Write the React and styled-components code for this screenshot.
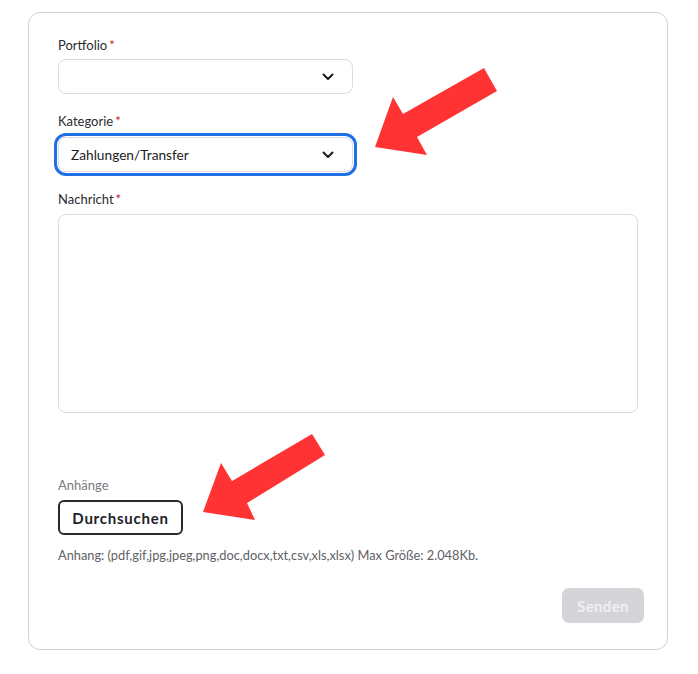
import React from 'react';
import styled, { createGlobalStyle } from 'styled-components';

const GlobalStyle = createGlobalStyle`
    body {
        margin: 0;
        background: #fff;
        font-family: Lato, "Noto Sans", sans-serif;
        color: #222;
    }
`;

const Page = styled.div`
    position: relative;
    width: 698px;
    height: 674px;
    padding: 12px 0 0 28px;
    box-sizing: border-box;
`;

const Card = styled.form`
    width: 640px;
    height: 638px;
    box-sizing: border-box;
    border: 1px solid #cfccdc;
    border-radius: 12px;
    padding: 24px 29px 0 29px;
    display: flex;
    flex-direction: column;
`;

const Label = styled.label`
    display: block;
    font-size: 13px;
    line-height: 16px;
    color: ${({muted}) => muted ? '#7b7b80' : '#2b2b30'};
    margin-bottom: ${({gap}) => gap || 6}px;
`;

const Req = styled.span`
    color: #b3261e;
    margin-left: 2px;
`;

const SelectBox = styled.div`
    width: 295px;
    height: 35px;
    box-sizing: border-box;
    border: 1px solid #dcdae6;
    border-radius: 8px;
    display: flex;
    align-items: center;
    justify-content: space-between;
    padding: 0 18px 0 12px;
    font-size: 13.7px;
    color: #222;
    outline: ${({focused}) => focused ? '3px solid #1f6fe5' : 'none'};
    outline-offset: 1px;
    margin-bottom: ${({mb}) => mb}px;
`;

const TextArea = styled.div`
    width: 100%;
    height: 199px;
    box-sizing: border-box;
    border: 1px solid #dcdae6;
    border-radius: 8px;
    margin-bottom: 64px;
`;

const Browse = styled.button`
    align-self: flex-start;
    width: 125px;
    height: 35px;
    box-sizing: border-box;
    border: 2px solid #2a2a2e;
    border-radius: 6px;
    background: #fff;
    font-family: Lato, "Noto Sans", sans-serif;
    font-weight: 700;
    font-size: 15px;
    letter-spacing: 0.75px;
    color: #22222a;
    margin-bottom: 12px;
`;

const Hint = styled.div`
    font-size: 12.8px;
    line-height: 16px;
    color: #5f5f66;
    margin-bottom: 25px;
`;

const Send = styled.button`
    align-self: flex-end;
    margin-right: -6px;
    width: 82px;
    height: 35px;
    border: none;
    border-radius: 7px;
    background: #d4d4d9;
    color: #f0f0f3;
    font-family: Lato, "Noto Sans", sans-serif;
    font-weight: 700;
    font-size: 15px;
    letter-spacing: 0.3px;
`;

const Arrow = styled.svg`
    position: absolute;
    left: 0;
    top: 0;
    pointer-events: none;
`;

const Chevron = () => (
    <svg width="12" height="8" viewBox="0 0 12 8">
        <path d="M1.5 1.5 L6 6 L10.5 1.5" fill="none" stroke="#1c1c1c" strokeWidth="2" strokeLinecap="round" strokeLinejoin="round" />
    </svg>
);

export default function App() {
    return (
        <Page>
            <GlobalStyle />
            <Card>
                <Label>Portfolio<Req>*</Req></Label>
                <SelectBox mb={19}>
                    <span />
                    <Chevron />
                </SelectBox>

                <Label gap={8}>Kategorie<Req>*</Req></Label>
                <SelectBox focused mb={19}>
                    <span>Zahlungen/Transfer</span>
                    <Chevron />
                </SelectBox>

                <Label gap={7}>Nachricht<Req>*</Req></Label>
                <TextArea />

                <Label muted gap={7}>Anhänge</Label>
                <Browse type="button">Durchsuchen</Browse>
                <Hint>Anhang: (pdf,gif,jpg,jpeg,png,doc,docx,txt,csv,xls,xlsx) Max Größe: 2.048Kb.</Hint>

                <Send type="button">Senden</Send>
            </Card>
            <Arrow width="698" height="674">
                <polygon fill="#ff3333" points="375,147 393,97 403,114 484,68 497,91 417,137 427,155" />
                <polygon fill="#ff3333" points="203,512 221,463 232,481 312,434 325,455 247,503 255,520" />
            </Arrow>
        </Page>
    );
}
